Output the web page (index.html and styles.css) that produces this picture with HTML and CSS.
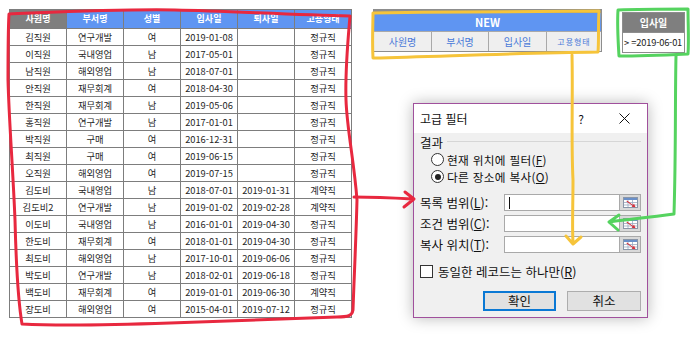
FILE: index.html
```html
<!DOCTYPE html>
<html lang="ko">
<head>
<meta charset="utf-8">
<link rel="stylesheet" href="styles.css">
</head>
<body>
<div class="page">
  <div class="sheet">
    <div class="h gray">사원명</div><div class="h">부서명</div><div class="h">성별</div><div class="h">입사일</div><div class="h">퇴사일</div><div class="h">고용형태</div>
    <div class="c">김직원</div><div class="c">연구개발</div><div class="c">여</div><div class="c">2019-01-08</div><div class="c"></div><div class="c">정규직</div>
    <div class="c">이직원</div><div class="c">국내영업</div><div class="c">남</div><div class="c">2017-05-01</div><div class="c"></div><div class="c">정규직</div>
    <div class="c">남직원</div><div class="c">해외영업</div><div class="c">남</div><div class="c">2018-07-01</div><div class="c"></div><div class="c">정규직</div>
    <div class="c">안직원</div><div class="c">재무회계</div><div class="c">여</div><div class="c">2018-04-30</div><div class="c"></div><div class="c">정규직</div>
    <div class="c">한직원</div><div class="c">재무회계</div><div class="c">남</div><div class="c">2019-05-06</div><div class="c"></div><div class="c">정규직</div>
    <div class="c">홍직원</div><div class="c">연구개발</div><div class="c">남</div><div class="c">2017-01-01</div><div class="c"></div><div class="c">정규직</div>
    <div class="c">박직원</div><div class="c">구매</div><div class="c">여</div><div class="c">2016-12-31</div><div class="c"></div><div class="c">정규직</div>
    <div class="c">최직원</div><div class="c">구매</div><div class="c">여</div><div class="c">2019-06-15</div><div class="c"></div><div class="c">정규직</div>
    <div class="c">오직원</div><div class="c">해외영업</div><div class="c">여</div><div class="c">2019-07-15</div><div class="c"></div><div class="c">정규직</div>
    <div class="c">김도비</div><div class="c">국내영업</div><div class="c">남</div><div class="c">2018-07-01</div><div class="c">2019-01-31</div><div class="c">계약직</div>
    <div class="c">김도비2</div><div class="c">연구개발</div><div class="c">남</div><div class="c">2019-01-02</div><div class="c">2019-02-28</div><div class="c">계약직</div>
    <div class="c">이도비</div><div class="c">국내영업</div><div class="c">남</div><div class="c">2016-01-01</div><div class="c">2019-04-30</div><div class="c">정규직</div>
    <div class="c">한도비</div><div class="c">재무회계</div><div class="c">여</div><div class="c">2018-01-01</div><div class="c">2019-04-30</div><div class="c">정규직</div>
    <div class="c">최도비</div><div class="c">해외영업</div><div class="c">남</div><div class="c">2017-10-01</div><div class="c">2019-06-06</div><div class="c">정규직</div>
    <div class="c">박도비</div><div class="c">연구개발</div><div class="c">남</div><div class="c">2018-02-01</div><div class="c">2019-06-18</div><div class="c">정규직</div>
    <div class="c">백도비</div><div class="c">재무회계</div><div class="c">여</div><div class="c">2019-01-01</div><div class="c">2019-06-30</div><div class="c">계약직</div>
    <div class="c">장도비</div><div class="c">해외영업</div><div class="c">여</div><div class="c">2015-04-01</div><div class="c">2019-07-12</div><div class="c">정규직</div>
  </div>

  <div class="right">
    <div class="top-row">
      <div class="newtbl">
        <div class="new-h">NEW</div>
        <div class="sub">사원명</div><div class="sub">부서명</div><div class="sub">입사일</div><div class="sub small">고용형태</div>
      </div>
      <div class="crit">
        <div class="crit-h">입사일</div>
        <div class="crit-c">&gt; =2019-06-01</div>
      </div>
    </div>

    <div class="dialog">
      <div class="dlg-title">
        <span class="dlg-name">고급 필터</span>
        <span class="dlg-help">?</span>
        <svg class="dlg-close" width="11" height="11" viewBox="0 0 11 11"><path d="M0.5 0.5 L10.5 10.5 M10.5 0.5 L0.5 10.5" stroke="#111" stroke-width="1" fill="none"/></svg>
      </div>
      <div class="dlg-body">
        <div class="group"><span>결과</span><span class="sep"></span></div>
        <div class="radio-row"><span class="radio"></span><span>현재 위치에 필터(<u>F</u>)</span></div>
        <div class="radio-row"><span class="radio on"></span><span>다른 장소에 복사(<u>O</u>)</span></div>
        <div class="ranges">
          <div class="range"><span class="lbl">목록 범위(<u>L</u>):</span><span class="inp"><span class="caret"></span></span><span class="pick"><svg width="15" height="11" viewBox="0 0 15 11"><rect x="0.5" y="0.5" width="14" height="10" fill="#fff" stroke="#8a96a8"/><rect x="1" y="1" width="13" height="2" fill="#6a8fc8"/><path d="M1 5.5H14M1 8H14M5 3V10M9.5 3V10" stroke="#9aaac0" stroke-width="0.8"/><path d="M4 3.5 L10 8 L11 6.5 L12.5 10.3 L8.5 9.8 L9.6 8.8 L3.5 4.5Z" fill="#d8303a"/></svg></span></div>
          <div class="range"><span class="lbl">조건 범위(<u>C</u>):</span><span class="inp"></span><span class="pick"><svg width="15" height="11" viewBox="0 0 15 11"><rect x="0.5" y="0.5" width="14" height="10" fill="#fff" stroke="#8a96a8"/><rect x="1" y="1" width="13" height="2" fill="#6a8fc8"/><path d="M1 5.5H14M1 8H14M5 3V10M9.5 3V10" stroke="#9aaac0" stroke-width="0.8"/><path d="M4 3.5 L10 8 L11 6.5 L12.5 10.3 L8.5 9.8 L9.6 8.8 L3.5 4.5Z" fill="#d8303a"/></svg></span></div>
          <div class="range"><span class="lbl">복사 위치(<u>T</u>):</span><span class="inp"></span><span class="pick"><svg width="15" height="11" viewBox="0 0 15 11"><rect x="0.5" y="0.5" width="14" height="10" fill="#fff" stroke="#8a96a8"/><rect x="1" y="1" width="13" height="2" fill="#6a8fc8"/><path d="M1 5.5H14M1 8H14M5 3V10M9.5 3V10" stroke="#9aaac0" stroke-width="0.8"/><path d="M4 3.5 L10 8 L11 6.5 L12.5 10.3 L8.5 9.8 L9.6 8.8 L3.5 4.5Z" fill="#d8303a"/></svg></span></div>
        </div>
        <div class="check-row"><span class="box"></span><span>동일한 레코드는 하나만(<u>R</u>)</span></div>
        <div class="buttons"><span class="btn primary">확인</span><span class="btn cancel">취소</span></div>
      </div>
    </div>
  </div>
</div>

<svg class="marks" width="698" height="341" viewBox="0 0 698 341">
  <g fill="none" stroke-linecap="round" stroke-linejoin="round">
    <path stroke="#e8283f" stroke-width="3" d="M9,14 C60,12 120,9 175,10 C230,11 290,15 350,16 C348,40 345,70 346,100 C347,130 354,160 357,200 C356,240 354,280 353,310 C352,316 348,317 337,317 C300,318 250,320 170,323 C110,325 60,326 22,324 C18,300 16,260 15,220 C13,170 9,120 8,80 C8,50 8,30 9,14 Z"/>
    <path stroke="#e8283f" stroke-width="3" d="M354,197 C375,197 395,198 413,199 M405,192 L414,199 L404,207"/>
    <path stroke="#f6c43a" stroke-width="3" d="M373,13 C450,12 530,11 599,11 C598,25 599,40 598,52 C520,53 450,56 373,58 C372,40 373,25 373,13 Z"/>
    <path stroke="#f6c43a" stroke-width="3" d="M572,55 C573,100 571,140 573,180 C573,205 572,225 573,243 M566,236 L573,244 L581,237"/>
    <path stroke="#55d35f" stroke-width="3" d="M618,10 C640,9 665,9 688,9 C688,25 689,40 688,54 C665,55 640,56 619,56 C618,40 617,25 618,10 Z"/>
    <path stroke="#55d35f" stroke-width="3" d="M676,56 C675,100 676,150 674,214 C660,216 630,219 609,222 M619,215 L609,222 L618,230"/>
  </g>
</svg>
</body>
</html>
```

FILE: styles.css
```css
html, body {
  margin: 0;
  padding: 0;
  background: #ffffff;
}

body {
  width: 698px;
  height: 341px;
  overflow: hidden;
  position: relative;
  font-family: "Noto Sans CJK KR", "Noto Sans", sans-serif;
  color: #222;
}

.page {
  display: flex;
  align-items: flex-start;
  padding: 9px 0 0 9px;
}

/* main worksheet table */
.sheet {
  display: grid;
  grid-template-columns: repeat(6, 56px);
  grid-template-rows: 18px repeat(17, 16px);
  gap: 1px;
  background: #7d7d7d;
  border: 1px solid #7d7d7d;
}

.sheet .h {
  background: #5f95f2;
  color: #fff;
  font-size: 9px;
  font-weight: bold;
  line-height: 18px;
  display: flex;
  align-items: center;
  justify-content: center;
}

.sheet .h.gray {
  background: #7f7f7f;
}

.sheet .c {
  background: #fff;
  font-size: 9.3px;
  color: #262626;
  line-height: 16px;
  display: flex;
  align-items: center;
  justify-content: center;
}

/* right side */
.right {
  display: flex;
  flex-direction: column;
  margin-left: 21px;
}

.top-row {
  display: flex;
  align-items: flex-start;
}

.newtbl {
  display: grid;
  grid-template-columns: 57px 56px 57px 54px;
  grid-template-rows: 18px 19px;
  gap: 1px;
  background: #a9a9a9;
  border: 1px solid #8d8d8d;
  border-top: 4px solid #8d8d8d;
}

.new-h {
  grid-column: 1 / 5;
  background: #5f95f2;
  color: #fff;
  font-weight: bold;
  font-size: 11px;
  line-height: 18px;
  display: flex;
  align-items: center;
  justify-content: center;
}

.sub {
  background: #efefef;
  color: #4a7ad9;
  font-size: 10px;
  line-height: 19px;
  display: flex;
  align-items: center;
  justify-content: center;
}

.sub.small {
  font-size: 8px;
  letter-spacing: 1px;
}

.crit {
  margin-left: 20px;
  margin-top: 3px;
  width: 63px;
  box-sizing: border-box;
  border: 1px solid #8d8d8d;
}

.crit-h {
  height: 19px;
  line-height: 19px;
  background: #7f7f7f;
  color: #fff;
  font-size: 10px;
  font-weight: bold;
  display: flex;
  align-items: center;
  justify-content: center;
}

.crit-c {
  height: 20px;
  line-height: 19px;
  background: #fff;
  font-size: 9.3px;
  color: #222;
  display: flex;
  align-items: center;
  padding-left: 1px;
  white-space: nowrap;
  border-top: 1px solid #8d8d8d;
  box-sizing: border-box;
  letter-spacing: -0.2px;
}

/* dialog */
.dialog {
  margin-top: 50px;
  margin-left: 40px;
  width: 235px;
  height: 215px;
  box-sizing: border-box;
  border: 1px solid #a0509c;
  background: #f0f0f0;
  box-shadow: 0 0 14px rgba(0, 0, 0, 0.28);
  display: flex;
  flex-direction: column;
}

.dlg-title {
  height: 29px;
  background: #fff;
  display: flex;
  align-items: center;
  padding-left: 6px;
  font-size: 12px;
  line-height: 16px;
  color: #111;
  flex-shrink: 0;
}

.dlg-name {
  flex: 1;
}

.dlg-help {
  font-size: 12px;
  margin-right: 35px;
}

.dlg-close {
  margin-right: 17px;
}

.dlg-body {
  padding: 0 6px;
  font-size: 12.5px;
  line-height: 16px;
  color: #111;
}

.group {
  display: flex;
  align-items: center;
  height: 16px;
  margin-top: 2px;
}

.group .sep {
  flex: 1;
  height: 1px;
  background: #d6d6d6;
  margin-left: 4px;
  margin-top: -3px;
}

.radio-row {
  display: flex;
  align-items: center;
  height: 17px;
  padding-left: 11px;
  white-space: nowrap;
  font-size: 11.7px;
  letter-spacing: 0.3px;
}

.radio {
  width: 11px;
  height: 11px;
  border: 1px solid #333;
  border-radius: 50%;
  background: #fff;
  margin-right: 3px;
  position: relative;
  flex-shrink: 0;
}

.radio.on::after {
  content: "";
  position: absolute;
  left: 2.5px;
  top: 2.5px;
  width: 6px;
  height: 6px;
  border-radius: 50%;
  background: #222;
}

.ranges {
  margin-top: 9px;
  display: flex;
  flex-direction: column;
  gap: 4px;
}

.range {
  display: flex;
  height: 17px;
  align-items: stretch;
}

.lbl {
  width: 84px;
  display: flex;
  align-items: center;
  white-space: nowrap;
}

.inp {
  width: 116px;
  box-sizing: border-box;
  border: 1px solid #a9a9a9;
  background: #fff;
  display: flex;
  align-items: center;
  padding-left: 4px;
}

.caret {
  width: 1px;
  height: 12px;
  background: #111;
}

.pick {
  width: 21px;
  box-sizing: border-box;
  border: 1px solid #a9a9a9;
  border-left: none;
  background: #d9d9d9;
  display: flex;
  align-items: center;
  justify-content: center;
}

.check-row {
  margin-top: 12px;
  height: 13px;
  line-height: 13px;
  display: flex;
  align-items: center;
  white-space: nowrap;
}

.box {
  width: 11px;
  height: 11px;
  border: 1px solid #333;
  background: #fff;
  margin-right: 5px;
  flex-shrink: 0;
}

.buttons {
  margin-top: 13px;
  display: flex;
  justify-content: flex-end;
  gap: 11px;
}

.btn {
  height: 20px;
  box-sizing: border-box;
  background: #e1e1e1;
  display: flex;
  align-items: center;
  justify-content: center;
  font-size: 12.5px;
}

.btn.primary {
  width: 73px;
  border: 2px solid #0a78d4;
}

.btn.cancel {
  width: 74px;
  border: 1px solid #adadad;
}

/* hand-drawn annotations lying over the content */
.marks {
  position: absolute;
  left: 0;
  top: 0;
  pointer-events: none;
}
```
